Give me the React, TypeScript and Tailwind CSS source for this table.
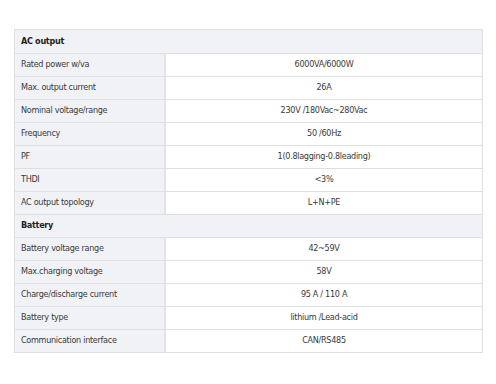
import React from "react";

type Row = { kind: "head"; label: string } | { kind: "row"; label: string; value: string };

const rows: Row[] = [
  { kind: "head", label: "AC output" },
  { kind: "row", label: "Rated power w/va", value: "6000VA/6000W" },
  { kind: "row", label: "Max. output current", value: "26A" },
  { kind: "row", label: "Nominal voltage/range", value: "230V /180Vac~280Vac" },
  { kind: "row", label: "Frequency", value: "50 /60Hz" },
  { kind: "row", label: "PF", value: "1(0.8lagging-0.8leading)" },
  { kind: "row", label: "THDI", value: "<3%" },
  { kind: "row", label: "AC output topology", value: "L+N+PE" },
  { kind: "head", label: "Battery" },
  { kind: "row", label: "Battery voltage range", value: "42~59V" },
  { kind: "row", label: "Max.charging voltage", value: "58V" },
  { kind: "row", label: "Charge/discharge current", value: "95 A / 110 A" },
  { kind: "row", label: "Battery type", value: "lithium /Lead-acid" },
  { kind: "row", label: "Communication interface", value: "CAN/RS485" },
];

export default function App() {
  return (
    <div
      className="w-[496px] h-[384px] bg-white pt-[29px] pl-[14px] text-[#3a3a3a] text-[9px] tracking-[-0.3px]"
      style={{ fontFamily: '"DejaVu Sans Condensed", "DejaVu Sans", sans-serif' }}
    >
      <div className="w-[469px] border border-[#dedfe3] flex flex-col">
        {rows.map((r, i) =>
          r.kind === "head" ? (
            <div
              key={i}
              className={`h-[23px] flex items-center px-[6px] bg-[#f1f2f6] font-bold text-[#222222] ${i > 0 ? "border-t border-[#dedfe3]" : ""}`}
            >
              {r.label}
            </div>
          ) : (
            <div key={i} className="h-[23px] flex border-t border-[#dedfe3]">
              <div className="w-[151px] bg-[#f1f2f6] border-r-2 border-[#e3e4e8] flex items-center px-[6px]">
                {r.label}
              </div>
              <div className="flex-1 flex items-center justify-center bg-white">{r.value}</div>
            </div>
          )
        )}
      </div>
    </div>
  );
}
